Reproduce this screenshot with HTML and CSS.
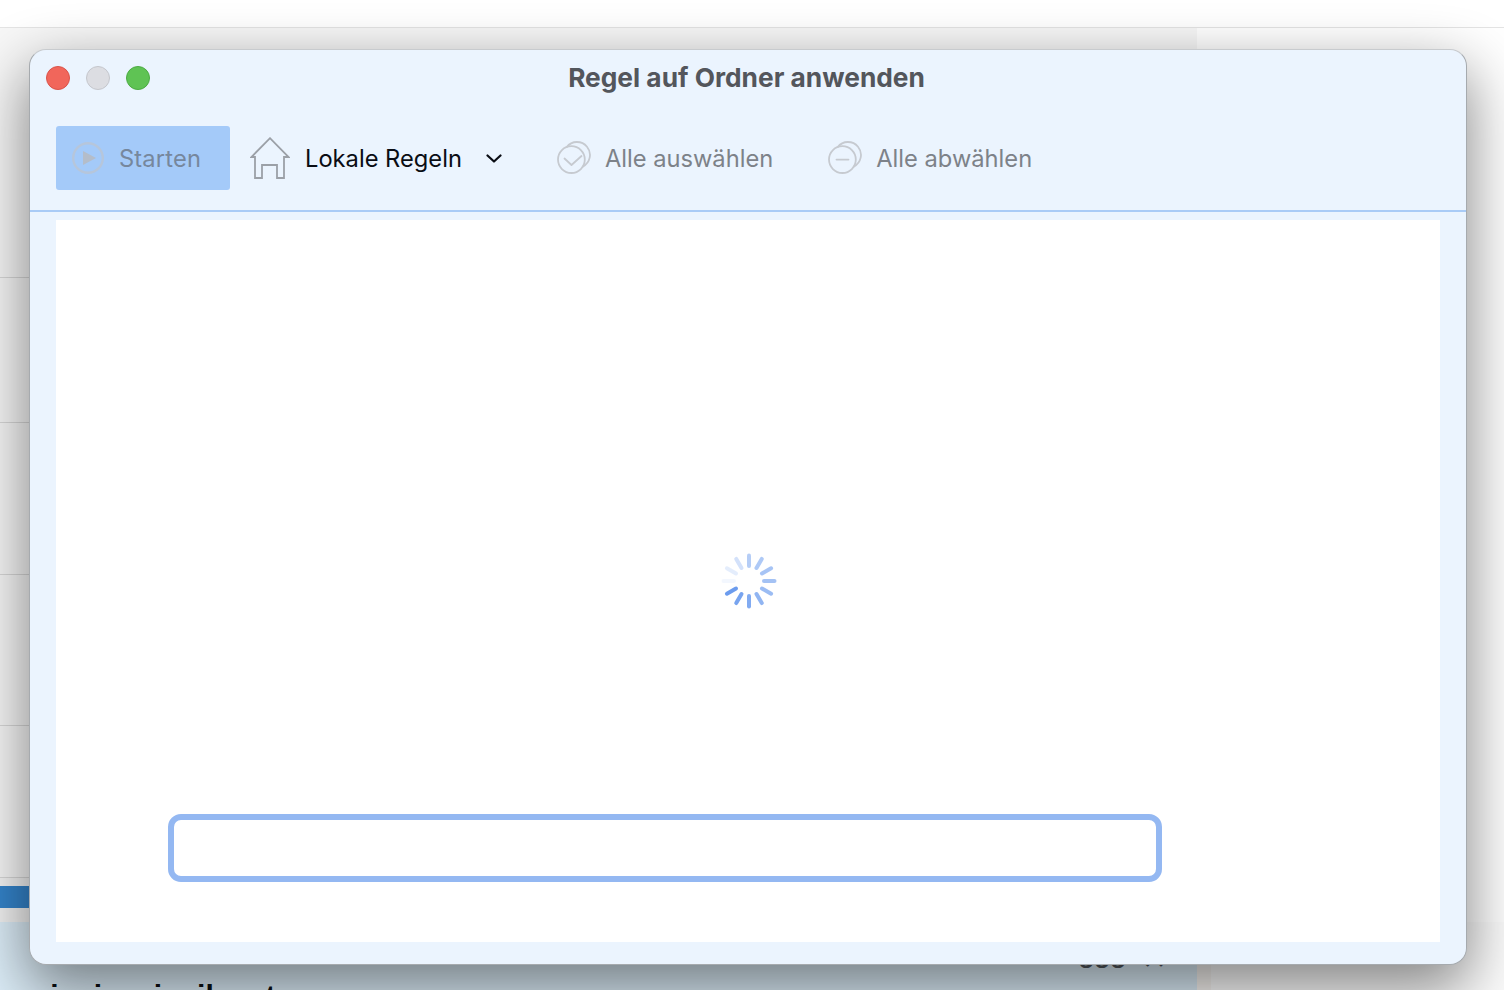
FILE: index.html
```html
<!DOCTYPE html>
<html lang="de">
<head>
<meta charset="utf-8">
<title>Regel auf Ordner anwenden</title>
<link rel="stylesheet" href="styles.css">
</head>
<body>
<div class="backdrop">
  <div class="topbar"></div>
  <div class="columns">
    <div class="main-col">
      <div class="row row-a"></div>
      <div class="row row-b"></div>
      <div class="row row-c"></div>
      <div class="row row-d"></div>
      <div class="row row-e"></div>
      <div class="gap-a"></div>
      <div class="blue-bar"></div>
      <div class="gap-b"></div>
      <div class="panel">
        <span class="panel-title">xainaianeineilanet</span>
        <span class="panel-tools"><span class="dots">ooo</span><span class="close">✕</span></span>
      </div>
    </div>
    <div class="side-col"><div class="side-foot"></div></div>
  </div>
</div>

<section class="window">
  <header class="titlebar">
    <div class="lights">
      <span class="light red"></span>
      <span class="light grey"></span>
      <span class="light green"></span>
    </div>
    <h1 class="title">Regel auf Ordner anwenden</h1>
  </header>
  <nav class="toolbar">
    <button class="start">
      <svg class="ico-play" width="32" height="32" viewBox="0 0 32 32"><circle cx="16" cy="16" r="14.8" fill="none" stroke="#b6c6db" stroke-width="2.4"/><path d="M11 9 24 16 11 23Z" fill="#b4bdca"/></svg>
      <span>Starten</span>
    </button>
    <div class="rules">
      <svg class="ico-home" width="40" height="42" viewBox="0 0 40 42" fill="none" stroke="#9ba0a7" stroke-width="1.8"><path d="M5 20H1.4L20 1.2 38.6 20H34V41H27V28H12V41H5Z"/></svg>
      <span class="rules-label">Lokale Regeln</span>
      <svg class="ico-chevron" width="16" height="9" viewBox="0 0 16 9" fill="none" stroke="#0a0d14" stroke-width="2.2" stroke-linecap="round" stroke-linejoin="round"><path d="M1.5 1.5 8 7.5 14.5 1.5"/></svg>
    </div>
    <div class="action action-all">
      <svg width="34" height="33" viewBox="0 0 34 33" fill="none" stroke="#c6cad0" stroke-width="1.8" stroke-linecap="round" stroke-linejoin="round"><circle cx="14.4" cy="18.6" r="13.4"/><path d="M9.7 6A13 13 0 1 1 25.8 25.6"/><path d="M7.5 17.5 14.5 24 24.5 15"/></svg>
      <span>Alle auswählen</span>
    </div>
    <div class="action action-none">
      <svg width="34" height="33" viewBox="0 0 34 33" fill="none" stroke="#c6cad0" stroke-width="1.8" stroke-linecap="round"><circle cx="14.4" cy="18.6" r="13.4"/><path d="M9.7 6A13 13 0 1 1 25.8 25.6"/><path d="M8.5 18.6H20.5"/></svg>
      <span>Alle abwählen</span>
    </div>
  </nav>
  <main class="content-wrap">
    <div class="content">
      <svg class="spinner" width="56" height="56" viewBox="-28 -28 56 56" stroke="#6c9cee" stroke-width="4" stroke-linecap="round">
        <line y1="-15" y2="-25.5" stroke-opacity=".5"/>
        <line y1="-15" y2="-25.5" stroke-opacity=".55" transform="rotate(30)"/>
        <line y1="-15" y2="-25.5" stroke-opacity=".6" transform="rotate(60)"/>
        <line y1="-15" y2="-25.5" stroke-opacity=".62" transform="rotate(90)"/>
        <line y1="-15" y2="-25.5" stroke-opacity=".68" transform="rotate(120)"/>
        <line y1="-15" y2="-25.5" stroke-opacity=".75" transform="rotate(150)"/>
        <line y1="-15" y2="-25.5" stroke-opacity=".85" transform="rotate(180)"/>
        <line y1="-15" y2="-25.5" stroke-opacity=".92" transform="rotate(210)"/>
        <line y1="-15" y2="-25.5" stroke-opacity="1" transform="rotate(240)"/>
        <line y1="-15" y2="-25.5" stroke-opacity=".08" transform="rotate(270)"/>
        <line y1="-15" y2="-25.5" stroke-opacity=".18" transform="rotate(300)"/>
        <line y1="-15" y2="-25.5" stroke-opacity=".3" transform="rotate(330)"/>
      </svg>
      <div class="field"></div>
    </div>
  </main>
</section>
</body>
</html>
```

FILE: styles.css
```css
* { box-sizing: border-box; }
html, body { margin: 0; height: 100%; }
body {
  width: 1504px;
  height: 990px;
  overflow: hidden;
  position: relative;
  background: #fff;
  font-family: Inter, "Liberation Sans", sans-serif;
}

/* page behind the dialog */
.backdrop { height: 990px; display: flex; flex-direction: column; overflow: hidden; }
.topbar { height: 28px; border-bottom: 1px solid #e4e4e4; background: #fff; flex: none; }
.columns { flex: 1; display: flex; min-height: 0; }
.main-col { width: 1197px; display: flex; flex-direction: column; flex: none; }
.side-col { flex: 1; background: #fff; display: flex; flex-direction: column; justify-content: flex-end; }
.side-foot { height: 68px; border-left: 14px solid #f8f5f2; background: #fcfcfc; }
.row { flex: none; border-bottom: 1px solid #d8d8d8; background: #f7f7f7; }
.row-a { height: 250px; }
.row-b { height: 145px; }
.row-c { height: 152px; }
.row-d { height: 151px; }
.row-e { height: 152px; }
.gap-a { height: 8px; flex: none; background: #f4f4f4; }
.blue-bar { height: 22px; flex: none; background: #3484cb; }
.gap-b { height: 14px; flex: none; background: #f2f2f2; }
.panel {
  flex: 1;
  background: #dcedf8;
  display: flex;
  justify-content: space-between;
  padding-right: 30px;
  overflow: hidden;
}
.panel-title {
  font: 700 30px/1 "Liberation Sans", sans-serif;
  color: #0b0f14;
  margin: 59px 0 0 17px;
  white-space: nowrap;
}
.panel-tools { display: flex; gap: 16px; align-items: center; color: #50565c; height: 30px; margin-top: 22px; }
.dots { font: 700 26px/1 "Liberation Sans", sans-serif; }
.close { font: 700 30px/1 "DejaVu Sans", sans-serif; }

/* dialog */
.window {
  position: absolute;
  left: 29px;
  top: 49px;
  width: 1438px;
  height: 916px;
  display: flex;
  flex-direction: column;
  background: #ebf4fe;
  border-radius: 17px;
  border: 1px solid #a6aaae;
  border-top-color: #c8cbce;
  box-shadow: 0 22px 60px 2px rgba(0, 0, 0, .48);
  overflow: hidden;
}
.titlebar { height: 55px; flex: none; display: flex; align-items: center; position: relative; }
.lights { display: flex; gap: 16px; padding-left: 16px; margin-top: 1px; position: relative; z-index: 1; }
.light { width: 24px; height: 24px; border-radius: 50%; border: 1px solid; }
.red { background: #f1665b; border-color: #d9534a; }
.grey { background: #dcdde2; border-color: #c4c6cc; }
.green { background: #5fc354; border-color: #4cab43; }
.title {
  position: absolute;
  inset: 0;
  margin: 0;
  padding-right: 3px;
  text-align: center;
  font-size: 26.3px;
  font-weight: 700;
  line-height: 55px;
  color: #53565c;
}
.toolbar {
  height: 107px;
  flex: none;
  display: flex;
  align-items: center;
  padding-left: 26px;
  border-bottom: 2px solid #a9cbf6;
  font-size: 23.7px;
  color: #7d8289;
}
.toolbar span { padding-top: 2px; }
.start {
  width: 174px;
  height: 64px;
  display: flex;
  align-items: center;
  gap: 15px;
  padding: 0 0 0 16px;
  border: 0;
  border-radius: 3px;
  background: #a4caf9;
  color: #76879d;
  font: inherit;
  letter-spacing: .15px;
}
.rules { display: flex; align-items: center; margin-left: 20px; color: #0a0d14; }
.ico-home { margin-right: 15px; }
.ico-chevron { margin-left: 24px; margin-top: 1px; }
.action { display: flex; align-items: center; gap: 14px; }
.action-all { margin-left: 55px; }
.action-none { margin-left: 55px; }
.content-wrap { flex: 1; padding: 8px 26px 22px 26px; min-height: 0; }
.content {
  height: 100%;
  background: #fff;
  position: relative;
  display: flex;
  flex-direction: column;
  align-items: center;
}
.spinner { margin-top: 333px; position: relative; left: 1px; }
.field {
  position: absolute;
  left: 112px;
  top: 594px;
  width: 994px;
  height: 68px;
  border: 6px solid #94b8f2;
  border-radius: 13px;
  background: #fff;
}
```
